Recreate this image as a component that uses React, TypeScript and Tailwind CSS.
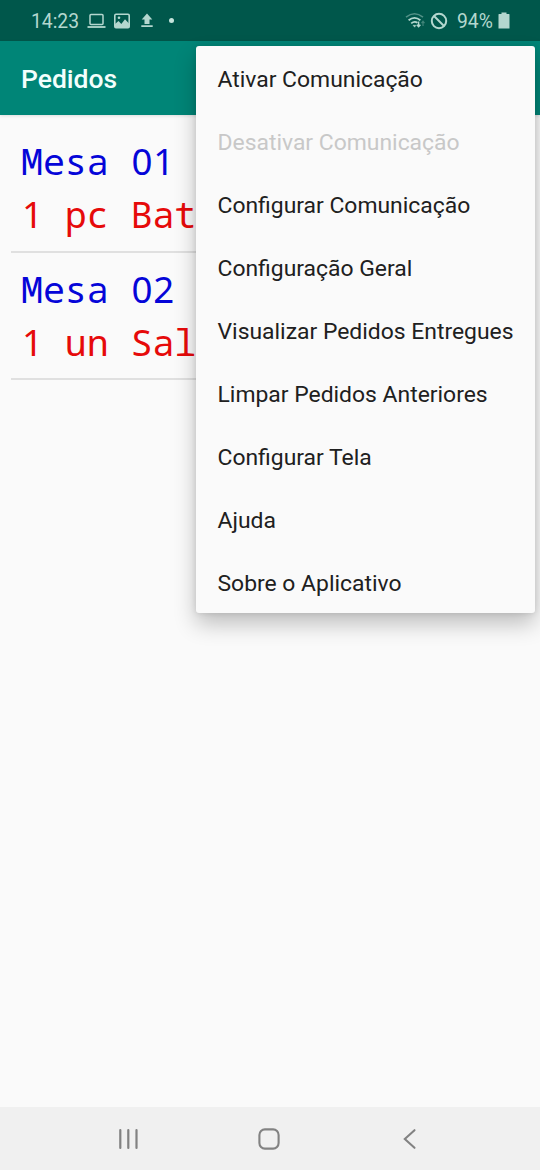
import React from "react";

type Order = { table: string; number: string; item: string };

const orders: Order[] = [
  { table: "Mesa", number: "01", item: " pc Bat" },
  { table: "Mesa", number: "02", item: " un Sal" },
];

const menuItems = [
  { label: "Ativar Comunicação" },
  { label: "Desativar Comunicação", disabled: true },
  { label: "Configurar Comunicação" },
  { label: "Configuração Geral" },
  { label: "Visualizar Pedidos Entregues" },
  { label: "Limpar Pedidos Anteriores" },
  { label: "Configurar Tela" },
  { label: "Ajuda" },
  { label: "Sobre o Aplicativo" },
];

function StatusBar() {
  return (
    <div className="flex h-[41px] items-center bg-[#00574b] pr-[30px] pl-[31px] text-[#b4d7cf]">
      <span className="w-[56px] pt-[3px] text-[19.3px] leading-6">14:23</span>
      <svg className="mr-2" width="19" height="16" viewBox="0 0 19 16" fill="none" stroke="currentColor">
        <rect x="3" y="1.5" width="13" height="10" rx="1" strokeWidth="1.5" />
        <path d="M0.5 14H18.5" strokeWidth="1.8" />
      </svg>
      <svg className="mr-[11px]" width="16" height="16" viewBox="0 0 16 16">
        <rect x=".8" y="1.3" width="14.4" height="13.4" rx="1.2" fill="none" stroke="currentColor" strokeWidth="1.6" />
        <path d="M1 14V11L4.5 8 7.3 11 11 6.3 15 10.5V14Z" fill="currentColor" />
        <circle cx="5" cy="4.8" r="1.3" fill="currentColor" />
      </svg>
      <svg width="12" height="16" viewBox="0 0 12 16" fill="currentColor">
        <path d="M6 .5L11.3 6.5H8.5V11H3.5V6.5H.7ZM.3 12.3H11.7V14H.3Z" />
      </svg>
      <span className="ml-4 size-[5px] rounded-full bg-[#c5e4dc]" />
      <div className="ml-auto flex items-center">
        <svg width="21" height="18" viewBox="0 0 21 18" fill="none" stroke="currentColor">
          <path d="M1 5.2Q9.5 -1.6 18 5.2" strokeWidth="1.6" opacity=".45" />
          <path d="M3.6 8.3Q9.5 3.4 15.4 8.3" strokeWidth="1.8" />
          <path d="M6.2 11.4Q9.5 8.7 12.5 10.8" strokeWidth="1.8" />
          <path d="M8 13.3 9.7 15.2 10.8 13.3Z" fill="currentColor" strokeWidth=".5" />
          <path d="M13.6 9.5V14.5M11.8 12.8 13.6 14.8 15.4 12.8" strokeWidth="1.4" />
          <path d="M18 14V9.5M16.5 11.2 18 9.3 19.5 11.2" strokeWidth="1.2" opacity=".35" />
        </svg>
        <svg className="ml-1" width="18" height="18" viewBox="0 0 18 18" fill="none" stroke="currentColor" strokeWidth="2">
          <circle cx="9" cy="9" r="7.2" />
          <path d="M4 4 14 14" />
        </svg>
        <span className="ml-[9px] w-[41px] pt-[3px] text-[19.3px] leading-6">94%</span>
        <svg width="12" height="17" viewBox="0 0 12 17" fill="currentColor">
          <path d="M3.5 .5H8.5V2H11Q11.5 2 11.5 2.5V16.5H.5V2.5Q.5 2 1 2H3.5Z" />
        </svg>
      </div>
    </div>
  );
}

function OrderRow({ order }: { order: Order }) {
  return (
    <li className="mx-[11px] h-[127.5px] border-b-2 border-[#e0e0e0] pt-[10px] pl-[10px] font-['Noto_Sans_Mono','Droid_Sans_Mono','DejaVu_Sans_Mono',monospace] text-[36.7px] leading-[53px] tracking-[-0.1px] whitespace-pre">
      <div className="text-[#0505d8]">
        {order.table}{" "}
        <span className="ml-px font-['Noto_Sans',sans-serif] tracking-[0.6px]">{order.number}</span>
      </div>
      <div className="text-[#e60a0a]">
        <span className="ml-px font-['Noto_Sans',sans-serif]">1</span>
        {order.item}
      </div>
    </li>
  );
}

function NavigationBar() {
  return (
    <nav className="flex h-[63px] items-center bg-[#f0f0f0] pt-px pl-[118px] text-[#828282]">
      <svg width="21" height="22" viewBox="0 0 21 22" stroke="currentColor" strokeWidth="2.2" strokeLinecap="round">
        <path d="M2.3 2V20M10.3 2V20M18.5 2V20" />
      </svg>
      <svg className="ml-[119px]" width="22" height="22" viewBox="0 0 22 22" fill="none" stroke="currentColor" strokeWidth="2.1">
        <rect x="1.4" y="1.4" width="19.2" height="19.2" rx="5.5" />
      </svg>
      <svg className="ml-[122px]" width="17" height="22" viewBox="0 0 17 22" fill="none" stroke="currentColor" strokeWidth="2.1" strokeLinecap="round">
        <path d="M12.5 2.2 2.8 11 12.5 19.8" />
      </svg>
    </nav>
  );
}

export default function App() {
  return (
    <div className="relative flex h-[1170px] w-[540px] flex-col overflow-hidden bg-[#fafafa] font-[Roboto,sans-serif]">
      <StatusBar />
      <header className="flex h-[74px] items-center bg-[#008577] pl-[21px] text-[26.5px] font-medium text-[#f2fffc] shadow-[0_1px_3px_rgba(0,0,0,0.12)]">
        <h1 className="pt-px">Pedidos</h1>
      </header>
      <ul className="flex-1 pt-[10px]">
        {orders.map((order) => (
          <OrderRow key={order.number} order={order} />
        ))}
      </ul>
      <NavigationBar />
      <div
        role="menu"
        className="absolute top-[46px] left-[196px] h-[567px] w-[339px] rounded-[3px] bg-[#fafafa] pt-px shadow-[0_11px_22px_rgba(0,0,0,0.24),0_0_6px_rgba(0,0,0,0.12)]"
      >
        {menuItems.map(({ label, disabled }) => (
          <div
            key={label}
            role="menuitem"
            aria-disabled={disabled}
            className={`flex h-[63px] items-center pt-[3px] pl-[21.5px] text-[22.9px] whitespace-nowrap ${disabled ? "text-[#c8c8c8]" : "text-[#202020]"}`}
          >
            {label}
          </div>
        ))}
      </div>
    </div>
  );
}
